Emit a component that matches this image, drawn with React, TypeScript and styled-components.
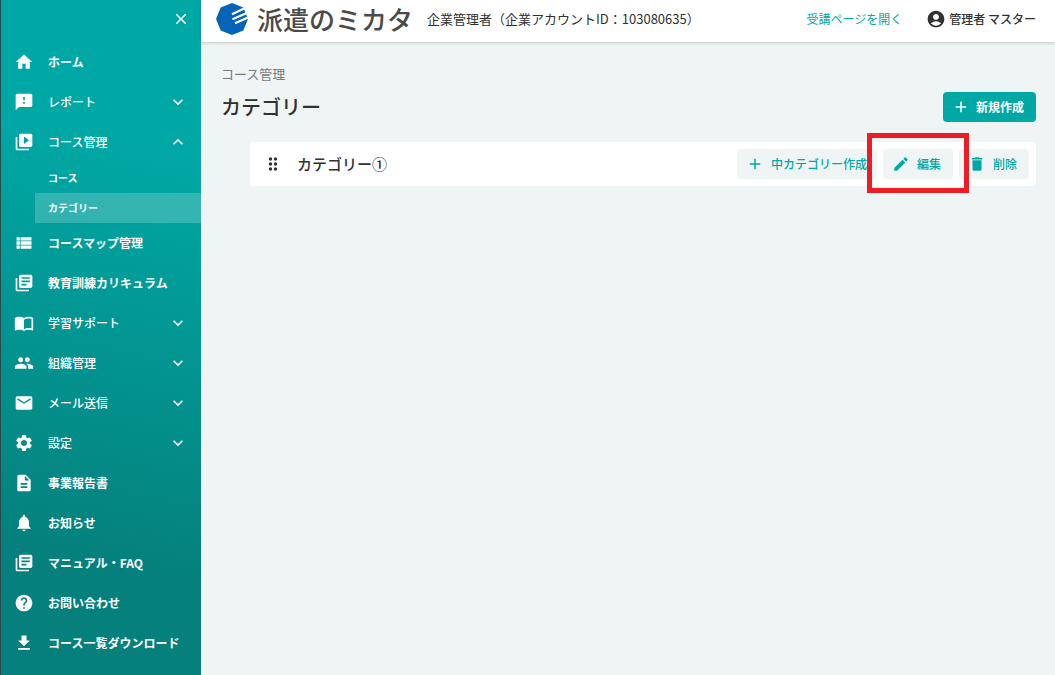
import React from 'react';
import styled, { createGlobalStyle, css } from 'styled-components';
import type { IconType } from 'react-icons';
import {
  MdAccountCircle,
  MdAdd,
  MdClose,
  MdDelete,
  MdDescription,
  MdDragIndicator,
  MdEdit,
  MdEmail,
  MdExpandLess,
  MdExpandMore,
  MdFeedback,
  MdFileDownload,
  MdHelp,
  MdHome,
  MdLibraryBooks,
  MdNotifications,
  MdPeople,
  MdSettings,
  MdVideoLibrary,
  MdViewList,
} from 'react-icons/md';

const teal = '#00a8a5';
const ink = '#2f3133';
const mist = '#eff5f5';

const GlobalStyle = createGlobalStyle`
  *, *::before, *::after { box-sizing: border-box; }
  body {
    margin: 0;
    background: ${mist};
    color: ${ink};
    font-family: "Noto Sans CJK JP", "Noto Sans", sans-serif;
    font-size: 12px;
    line-height: 20px;
  }
  button { font: inherit; color: inherit; border: 0; background: none; padding: 0; cursor: pointer; }
  a { color: inherit; text-decoration: none; }
  h1, p, ul { margin: 0; padding: 0; font-weight: inherit; }
  ul { list-style: none; }
  svg { display: block; flex: none; }
`;

const Page = styled.div`
  display: flex;
  min-height: 100vh;
`;

const Sidebar = styled.aside`
  flex: none;
  width: 201px;
  border-left: 1px solid #2a4a50;
  background: linear-gradient(192deg, ${teal} 22%, #05807c 82%);
  color: #fff;
`;

const SidebarTop = styled.div`
  display: flex;
  justify-content: flex-end;
  padding: 10px 11px 14px;
`;

const navRow = css`
  display: flex;
  align-items: center;
  width: 100%;
  height: 40px;
  padding: 0 13px;
  text-align: left;
  white-space: nowrap;
`;

const NavLink = styled.a`
  ${navRow}
  font-weight: 700;
`;

const NavToggle = styled.button`
  ${navRow}
  font-weight: 500;
`;

const NavLabel = styled.span`
  flex: 1;
  margin-left: 14px;
`;

const SubMenu = styled.ul`
  padding-top: 1px;
`;

const SubLink = styled.a<{ $current?: boolean }>`
  display: flex;
  align-items: center;
  height: 30px;
  margin-left: 34px;
  padding-left: 13px;
  font-size: 10px;
  font-weight: 700;
  background: ${(p) => (p.$current ? 'rgba(255, 255, 255, 0.2)' : 'transparent')};
`;

const Body = styled.div`
  flex: 1;
  min-width: 0;
`;

const Header = styled.header`
  display: flex;
  align-items: center;
  height: 42px;
  padding: 0 19px 4px 14px;
  background: #fff;
  box-shadow: 0 1px 3px rgba(0, 0, 0, 0.2);
  white-space: nowrap;
`;

const Brand = styled.a`
  display: flex;
  align-items: center;
  gap: 8px;
  color: #4b4a48;
  font-size: 26px;
  line-height: 38px;
  font-weight: 500;
`;

const Account = styled.p`
  flex: 1;
  margin-left: 14px;
  font-size: 13px;
`;

const LearnerLink = styled.a`
  color: ${teal};
`;

const UserButton = styled.button`
  display: flex;
  align-items: center;
  gap: 3px;
  margin-left: 24px;
  font-weight: 500;
`;

const Main = styled.main`
  padding: 22px 19px;
`;

const Crumb = styled.p`
  padding-left: 1px;
  color: #777b7d;
  font-size: 13px;
`;

const TitleRow = styled.div`
  display: flex;
  align-items: center;
  justify-content: space-between;
  margin-top: 8px;
  padding-left: 1px;
`;

const Title = styled.h1`
  font-size: 20px;
  line-height: 30px;
  font-weight: 500;
`;

const Button = styled.button<{ $primary?: boolean }>`
  display: flex;
  align-items: center;
  gap: ${(p) => (p.$primary ? 6 : 7)}px;
  min-width: 70px;
  height: 30px;
  padding: 0 ${(p) => (p.$primary ? 12 : 10)}px 0 9px;
  border-radius: 4px;
  background: ${(p) => (p.$primary ? teal : mist)};
  color: ${(p) => (p.$primary ? '#fff' : teal)};
  font-weight: ${(p) => (p.$primary ? 700 : 500)};
  white-space: nowrap;
`;

const CategoryRow = styled.li`
  display: flex;
  align-items: center;
  height: 44px;
  margin: 20px 0 0 30px;
  padding: 0 7px 0 13px;
  border-radius: 4px;
  background: #fff;
`;

const CategoryName = styled.span`
  flex: 1;
  margin-left: 14px;
  font-size: 15px;
  font-weight: 500;
`;

const Actions = styled.div`
  display: flex;
  gap: 6px;
`;

const Highlighted = styled.div`
  position: relative;
  &::after {
    content: '';
    position: absolute;
    inset: -16px -16px -14px;
    border: 5px solid #ee1c25;
    pointer-events: none;
  }
`;

const OpenBookIcon: IconType = ({ size }) => (
  <svg width={size} height={size} viewBox="0 0 24 24" fill="currentColor" aria-hidden="true">
    <path d="M21 5c-1.11-.35-2.33-.5-3.5-.5-1.95 0-4.05.4-5.5 1.5-1.45-1.1-3.55-1.5-5.5-1.5S2.45 4.9 1 6v14.65c0 .25.25.5.5.5.1 0 .15-.05.25-.05C3.1 20.45 5.05 20 6.5 20c1.95 0 4.05.4 5.5 1.5 1.35-.85 3.8-1.5 5.5-1.5 1.65 0 3.35.3 4.75 1.05.1.05.15.05.25.05.25 0 .5-.25.5-.5V6c-.6-.45-1.25-.75-2-1zm0 13.5c-1.1-.35-2.3-.5-3.5-.5-1.7 0-4.15.65-5.5 1.5V8c1.35-.85 3.8-1.5 5.5-1.5 1.2 0 2.4.15 3.5.5v11.5z" />
  </svg>
);

const BrandMark = () => (
  <svg width="34" height="34" viewBox="0 0 34 34" aria-hidden="true">
    <path d="M17 1 L28.3 5.5 L33 17 L28.3 28.5 L17 33 L5.7 28.5 L1 17 L5.7 5.5Z" fill="#0464b8" />
    <g stroke="#fff" strokeWidth="2.1">
      <path d="M17 12.2 L30 6" />
      <path d="M17.5 17.3 L33 10.5" />
      <path d="M20 21.2 L34 15" />
    </g>
  </svg>
);

type Item = {
  label: string;
  icon: IconType;
  expandable?: boolean;
  children?: { label: string; current?: boolean }[];
};

const items: Item[] = [
  { label: 'ホーム', icon: MdHome },
  { label: 'レポート', icon: MdFeedback, expandable: true },
  {
    label: 'コース管理',
    icon: MdVideoLibrary,
    expandable: true,
    children: [{ label: 'コース' }, { label: 'カテゴリー', current: true }],
  },
  { label: 'コースマップ管理', icon: MdViewList },
  { label: '教育訓練カリキュラム', icon: MdLibraryBooks },
  { label: '学習サポート', icon: OpenBookIcon, expandable: true },
  { label: '組織管理', icon: MdPeople, expandable: true },
  { label: 'メール送信', icon: MdEmail, expandable: true },
  { label: '設定', icon: MdSettings, expandable: true },
  { label: '事業報告書', icon: MdDescription },
  { label: 'お知らせ', icon: MdNotifications },
  { label: 'マニュアル・FAQ', icon: MdLibraryBooks },
  { label: 'お問い合わせ', icon: MdHelp },
  { label: 'コース一覧ダウンロード', icon: MdFileDownload },
];

const NavItem = ({ label, icon: Icon, expandable, children }: Item) => (
  <li>
    {expandable ? (
      <NavToggle type="button" aria-expanded={Boolean(children)}>
        <Icon size={20} />
        <NavLabel>{label}</NavLabel>
        {children ? <MdExpandLess size={20} /> : <MdExpandMore size={20} />}
      </NavToggle>
    ) : (
      <NavLink href="#">
        <Icon size={20} />
        <NavLabel>{label}</NavLabel>
      </NavLink>
    )}
    {children && (
      <SubMenu>
        {children.map((c) => (
          <li key={c.label}>
            <SubLink href="#" $current={c.current} aria-current={c.current ? 'page' : undefined}>
              {c.label}
            </SubLink>
          </li>
        ))}
      </SubMenu>
    )}
  </li>
);

export default function App() {
  return (
    <Page>
      <GlobalStyle />
      <Sidebar>
        <SidebarTop>
          <button type="button" aria-label="閉じる">
            <MdClose size={18} />
          </button>
        </SidebarTop>
        <nav>
          <ul>
            {items.map((item) => (
              <NavItem key={item.label} {...item} />
            ))}
          </ul>
        </nav>
      </Sidebar>
      <Body>
        <Header>
          <Brand href="#">
            <BrandMark />
            派遣のミカタ
          </Brand>
          <Account>企業管理者（企業アカウントID：103080635）</Account>
          <LearnerLink href="#">受講ページを開く</LearnerLink>
          <UserButton type="button">
            <MdAccountCircle size={20} />
            管理者 マスター
          </UserButton>
        </Header>
        <Main>
          <Crumb>コース管理</Crumb>
          <TitleRow>
            <Title>カテゴリー</Title>
            <Button type="button" $primary>
              <MdAdd size={18} />
              新規作成
            </Button>
          </TitleRow>
          <ul>
            <CategoryRow>
              <MdDragIndicator size={20} />
              <CategoryName>カテゴリー①</CategoryName>
              <Actions>
                <Button type="button">
                  <MdAdd size={18} />
                  中カテゴリー作成
                </Button>
                <Highlighted>
                  <Button type="button">
                    <MdEdit size={18} />
                    編集
                  </Button>
                </Highlighted>
                <Button type="button">
                  <MdDelete size={18} />
                  削除
                </Button>
              </Actions>
            </CategoryRow>
          </ul>
        </Main>
      </Body>
    </Page>
  );
}
